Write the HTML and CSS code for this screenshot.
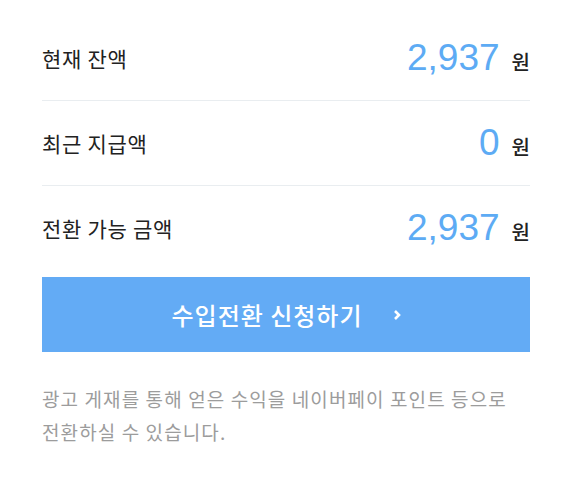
FILE: index.html
```html
<!DOCTYPE html>
<html>
<head>
    <link rel="stylesheet" href="styles.css">
</head>
<body>
<div class="wrap">
    <div class="row">
        <span class="label">현재 잔액</span>
        <span class="amount"><em>2,937</em> 원</span>
    </div>
    <div class="row">
        <span class="label">최근 지급액</span>
        <span class="amount"><em>0</em> 원</span>
    </div>
    <div class="row last">
        <span class="label">전환 가능 금액</span>
        <span class="amount"><em>2,937</em> 원</span>
    </div>
    <a href="#" class="button">수입전환 신청하기
        <svg width="8" height="12" viewBox="0 0 8 12"><path d="M2 2 L6 6 L2 10" fill="none" stroke="#fff" stroke-width="2.6"/></svg>
    </a>
    <p class="desc">광고 게재를 통해 얻은 수익을 네이버페이 포인트 등으로 전환하실 수 있습니다.</p>
</div>
</body>
</html>
```

FILE: styles.css
```css
body {
    margin: 0;
    background-color: #fff;
    font-family: "Noto Sans CJK KR", "Noto Sans", sans-serif;
    color: #222;
}
.wrap {
    padding: 16px 50px 0 42px;
}
.row {
    height: 84px;
    display: flex;
    align-items: center;
    justify-content: space-between;
    border-bottom: 1px solid #e9edf0;
}
.row.last {
    border-bottom: none;
}
.label {
    font-size: 21px;
    letter-spacing: 0.7px;
}
.amount {
    font-size: 20px;
    font-weight: 500;
    display: flex;
    align-items: baseline;
    gap: 12px;
}
.amount em {
    font-style: normal;
    font-family: "Liberation Sans", Arial, sans-serif;
    font-weight: normal;
    font-size: 37px;
    color: #5dabf4;
}
.button {
    margin-top: 7px;
    height: 75px;
    background-color: #63abf5;
    color: white;
    text-decoration: none;
    font-size: 24px;
    font-weight: 500;
    letter-spacing: 1px;
    display: flex;
    align-items: center;
    justify-content: center;
    gap: 30px;
}
.desc {
    margin: 30px 0 0;
    font-size: 19px;
    letter-spacing: 1.1px;
    line-height: 33px;
    color: #9c9c9c;
    word-break: keep-all;
}
```
